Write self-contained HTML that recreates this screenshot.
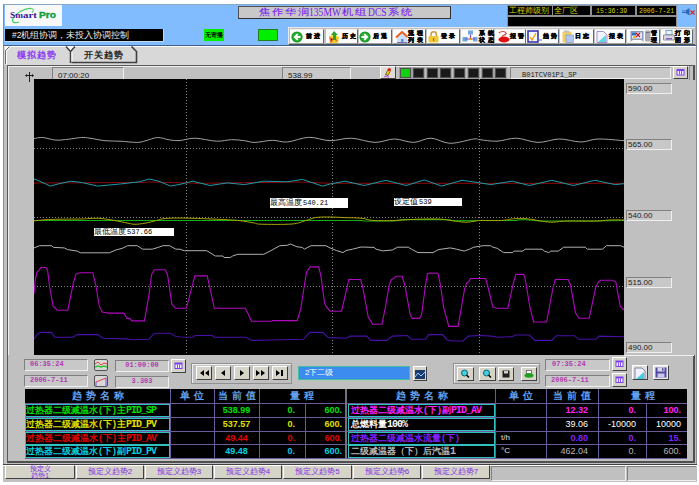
<!DOCTYPE html><html><head><meta charset="utf-8"><style>
*{margin:0;padding:0;box-sizing:border-box}
html,body{width:699px;height:485px;overflow:hidden;background:#fff}
body{position:relative;font-family:"Liberation Sans",sans-serif}
.a{position:absolute;overflow:hidden;white-space:nowrap}
.m{font-family:"Liberation Mono",monospace}
.s{font-family:"Liberation Serif",serif}
</style></head><body>
<div class="a" style="left:3px;top:4px;width:694px;height:477px;background:#c0c0c0;border-left:1px solid #8c8c8c;border-right:1px solid #8c8c8c;border-bottom:1px solid #8c8c8c;"></div>
<div class="a" style="left:3px;top:4px;width:694px;height:42px;background:#80bcff;border-top:1px solid #8aa8c8;border-left:1px solid #8c8c8c;border-right:1px solid #8c8c8c;border-bottom:1px solid #40608a;"></div>
<div class="a" style="left:5px;top:5px;width:57px;height:21px;background:#f8f8f8;"><svg width="57" height="21" viewBox="0 0 57 21" style="display:block">
<path d="M26 3.5C20 3 11 8 8 13.5c-2 4 2 5 6 3.5" fill="none" stroke="#30c850" stroke-width="1.3" opacity="0.9"/>
<path d="M26 3.5c3 0 3 2 1 4" fill="none" stroke="#30c850" stroke-width="1.1" opacity="0.8"/>
<text x="5" y="12.8" font-family="Liberation Serif" font-weight="bold" font-size="8.5" fill="#3a1aa0" textLength="13" lengthAdjust="spacingAndGlyphs">Sm</text>
<text x="18" y="12.8" font-family="Liberation Serif" font-weight="bold" font-size="8.5" fill="#3a1aa0" textLength="14" lengthAdjust="spacingAndGlyphs">art</text>
<text x="34" y="12.8" font-family="Liberation Sans" font-weight="bold" font-size="8.5" fill="#10a040" textLength="17" lengthAdjust="spacingAndGlyphs" stroke="#10a040" stroke-width="0.4">Pro</text>
</svg></div>
<div class="a" style="left:5px;top:29px;width:159px;height:13px;background:#000;border-bottom:1px solid #c0d8f0;border-right:1px solid #c0d8f0;color:#e8e8e8;font-size:8.5px;line-height:12px;padding-left:7px;letter-spacing:0px;">#2机组协调，未投入协调控制</div>
<div class="a" style="left:204px;top:29px;width:20px;height:12px;background:#00f000;color:#000;font-size:6px;line-height:12px;text-align:center;font-weight:bold;">无寄播</div>
<div class="a" style="left:258px;top:29px;width:20px;height:12px;background:#00ee00;border:1px solid #208020;"></div>
<div class="a" style="left:238px;top:6px;width:213px;height:13px;background:#c8c8c8;border:1px solid #505050;border-right-color:#303030;border-bottom-color:#303030;"></div>
<div style="position:absolute;top:7px;color:#7a20f0;line-height:11px;transform-origin:0 50%;white-space:nowrap;left:259px;font-size:9px;letter-spacing:1.5px;transform:scaleX(1.25);-webkit-text-stroke:0.1px #7a20f0">焦作华润</div>
<div class="s" style="position:absolute;top:7px;color:#7a20f0;line-height:11px;transform-origin:0 50%;white-space:nowrap;left:309px;font-size:12px;top:6px;line-height:12px;transform:scaleX(0.8)">135MW</div>
<div style="position:absolute;top:7px;color:#7a20f0;line-height:11px;transform-origin:0 50%;white-space:nowrap;left:342px;font-size:9px;letter-spacing:1.5px;transform:scaleX(1.25);-webkit-text-stroke:0.1px #7a20f0">机组</div>
<div class="s" style="position:absolute;top:7px;color:#7a20f0;line-height:11px;transform-origin:0 50%;white-space:nowrap;left:368px;font-size:12px;top:6px;line-height:12px;transform:scaleX(0.8)">DCS</div>
<div style="position:absolute;top:7px;color:#7a20f0;line-height:11px;transform-origin:0 50%;white-space:nowrap;left:388px;font-size:9px;letter-spacing:1.5px;transform:scaleX(1.25);-webkit-text-stroke:0.1px #7a20f0">系统</div>
<div class="a" style="left:507px;top:5px;width:170px;height:23px;background:#909090;"></div>
<div class="a" style="left:508px;top:6px;width:44px;height:9px;background:#000;color:#d0d000;font-size:8px;line-height:9px;padding-left:1px;">工程师级别</div>
<div class="a" style="left:553px;top:6px;width:37px;height:9px;background:#000;color:#d0d000;font-size:8px;line-height:9px;padding-left:1px;">全厂区</div>
<div class="a" style="left:592px;top:6px;width:43px;height:9px;background:#000;color:#d0d000;font-size:6.5px;line-height:10px;padding-left:4px;"><span class="m">15:36:39</span></div>
<div class="a" style="left:637px;top:6px;width:39px;height:9px;background:#000;color:#d0d000;font-size:6.5px;line-height:10px;padding-left:2px;"><span class="m">2006-7-21</span></div>
<div class="a" style="left:508px;top:17px;width:168px;height:9px;background:#000;"></div>
<div class="a" style="left:681px;top:6px;width:15px;height:12px;"><svg width="15" height="12" style="display:block"><path d="M1 4.5h3.5l4-2.5v7.5l-4-2.5H1z" fill="#3068b8"/><path d="M1 5.5h4" stroke="#80b0e8" stroke-width="0.8"/><path d="M9.5 4.5l4 4M13.5 4.5l-4 4" stroke="#e02020" stroke-width="1.1"/></svg></div>
<div class="a" style="left:288px;top:27px;width:407px;height:18px;background:#c0c0c0;border-top:1px solid #e8e8e8;border-left:1px solid #e8e8e8;border-bottom:1px solid #505050;"></div>
<div class="a" style="left:290px;top:29px;width:34px;height:15px;background:#fcfcfc;border-right:1px solid #606878;border-bottom:1px solid #a0a0a0;border-top:1px solid #f0f0f0;"></div>
<div class="a" style="left:326px;top:29px;width:32px;height:15px;background:#fcfcfc;border-right:1px solid #606878;border-bottom:1px solid #a0a0a0;border-top:1px solid #f0f0f0;"></div>
<div class="a" style="left:359px;top:29px;width:33px;height:15px;background:#fcfcfc;border-right:1px solid #606878;border-bottom:1px solid #a0a0a0;border-top:1px solid #f0f0f0;"></div>
<div class="a" style="left:393px;top:29px;width:33px;height:15px;background:#fcfcfc;border-right:1px solid #606878;border-bottom:1px solid #a0a0a0;border-top:1px solid #f0f0f0;"></div>
<div class="a" style="left:427px;top:29px;width:33px;height:15px;background:#fcfcfc;border-right:1px solid #606878;border-bottom:1px solid #a0a0a0;border-top:1px solid #f0f0f0;"></div>
<div class="a" style="left:461px;top:29px;width:33px;height:15px;background:#fcfcfc;border-right:1px solid #606878;border-bottom:1px solid #a0a0a0;border-top:1px solid #f0f0f0;"></div>
<div class="a" style="left:495px;top:29px;width:31px;height:15px;background:#fcfcfc;border-right:1px solid #606878;border-bottom:1px solid #a0a0a0;border-top:1px solid #f0f0f0;"></div>
<div class="a" style="left:526px;top:29px;width:33px;height:15px;background:#fcfcfc;border-right:1px solid #606878;border-bottom:1px solid #a0a0a0;border-top:1px solid #f0f0f0;"></div>
<div class="a" style="left:560px;top:29px;width:34px;height:15px;background:#fcfcfc;border-right:1px solid #606878;border-bottom:1px solid #a0a0a0;border-top:1px solid #f0f0f0;"></div>
<div class="a" style="left:595px;top:29px;width:31px;height:15px;background:#fcfcfc;border-right:1px solid #606878;border-bottom:1px solid #a0a0a0;border-top:1px solid #f0f0f0;"></div>
<div class="a" style="left:627px;top:29px;width:33px;height:15px;background:#fcfcfc;border-right:1px solid #606878;border-bottom:1px solid #a0a0a0;border-top:1px solid #f0f0f0;"></div>
<div class="a" style="left:661px;top:29px;width:32px;height:15px;background:#fcfcfc;border-right:1px solid #606878;border-bottom:1px solid #a0a0a0;border-top:1px solid #f0f0f0;"></div>
<svg class="a" style="left:291px;top:31px" width="12" height="12" viewBox="0 0 12 12"><circle cx="6" cy="6" r="5.6" fill="#1a9a2a"/><circle cx="6" cy="6" r="4.2" fill="#28b030"/><path d="M9.5 6H4.5M6.8 3.2L3.8 6l3 2.8" stroke="#fff" stroke-width="1.8" fill="none"/></svg>
<div class="a" style="left:306px;top:33px;font-size:6px;line-height:7px;font-weight:bold;color:#000;letter-spacing:2px;overflow:visible;-webkit-text-stroke:0.4px #000">前进</div>
<svg class="a" style="left:328px;top:30px" width="13" height="13" viewBox="0 0 13 13"><path d="M1 6l6-1 4 2-1 6H2z" fill="#f0d020"/><path d="M2 8l3 1-2 3zM7 9l2 2" stroke="#e06030" stroke-width="1.2"/><path d="M6 1l4 4H8v5H5V5H3z" fill="#30a030"/></svg>
<div class="a" style="left:342px;top:33px;font-size:6px;line-height:7px;font-weight:bold;color:#000;letter-spacing:2px;overflow:visible;-webkit-text-stroke:0.4px #000">历史</div>
<svg class="a" style="left:359px;top:31px" width="12" height="12" viewBox="0 0 12 12"><circle cx="6" cy="6" r="5.6" fill="#1a9a2a"/><circle cx="6" cy="6" r="4.2" fill="#28b030"/><path d="M2.5 6H7.5M5.2 3.2L8.2 6l-3 2.8" stroke="#fff" stroke-width="1.8" fill="none"/></svg>
<div class="a" style="left:373px;top:33px;font-size:6px;line-height:7px;font-weight:bold;color:#000;letter-spacing:2px;overflow:visible;-webkit-text-stroke:0.4px #000">后退</div>
<svg class="a" style="left:395px;top:31px" width="13" height="12" viewBox="0 0 13 12"><path d="M2 6L7 1.5 12 6v5.5H2z" fill="#c8e0f8"/><path d="M1 6.5L7 1l5.5 5" stroke="#f06020" stroke-width="2" fill="none"/><rect x="6" y="8" width="2.5" height="3.5" fill="#6090d0"/><path d="M2 11.5h10" stroke="#8070c0"/></svg>
<div class="a" style="left:408px;top:30px;font-size:6px;line-height:6.5px;font-weight:bold;color:#000;letter-spacing:3px;overflow:visible;-webkit-text-stroke:0.4px #000">流程<br>列表</div>
<svg class="a" style="left:427px;top:30px" width="13" height="13" viewBox="0 0 13 13"><path d="M4 6.5V4.5a2.7 2.7 0 0 1 5.4 0v2" stroke="#c0a040" stroke-width="1.5" fill="none"/><rect x="1.5" y="6" width="10" height="6.5" rx="1" fill="#f0c838"/><rect x="6" y="8" width="1.2" height="3" fill="#a07010"/></svg>
<div class="a" style="left:441px;top:33px;font-size:6px;line-height:7px;font-weight:bold;color:#000;letter-spacing:2px;overflow:visible;-webkit-text-stroke:0.4px #000">登录</div>
<svg class="a" style="left:462px;top:30px" width="16" height="13" viewBox="0 0 16 13"><rect x="6" y="0.5" width="5" height="4" fill="#70a8e0"/><rect x="0.5" y="7" width="5" height="4.5" fill="#70a8e0"/><rect x="11" y="7" width="4.5" height="4.5" fill="#70a8e0"/><path d="M8.5 4.5v4M3 9h10" stroke="#8050c0" stroke-width="1.2"/><circle cx="8.5" cy="9" r="1.2" fill="#e0a000"/></svg>
<div class="a" style="left:479px;top:30px;font-size:6px;line-height:6.5px;font-weight:bold;color:#000;letter-spacing:3px;overflow:visible;-webkit-text-stroke:0.4px #000">系统<br>状态</div>
<svg class="a" style="left:497px;top:30px" width="13" height="13" viewBox="0 0 13 13"><path d="M2 3c2-2 6-2 7 0s-4 2-4 4" stroke="#d04040" stroke-width="1.2" fill="none"/><ellipse cx="7" cy="9.5" rx="5.5" ry="3" fill="#e01010"/></svg>
<div class="a" style="left:510px;top:33px;font-size:6px;line-height:7px;font-weight:bold;color:#000;letter-spacing:2px;overflow:visible;-webkit-text-stroke:0.4px #000">报警</div>
<svg class="a" style="left:527px;top:30px" width="15" height="13" viewBox="0 0 15 13"><rect x="1" y="1" width="10" height="11" fill="#f8f8ff" stroke="#3838b0" stroke-width="1.6"/><path d="M3 7l2 3 4-7" stroke="#f0a000" stroke-width="1.3" fill="none"/><path d="M11 10h4" stroke="#5060c0"/></svg>
<div class="a" style="left:543px;top:33px;font-size:6px;line-height:7px;font-weight:bold;color:#000;letter-spacing:2px;overflow:visible;-webkit-text-stroke:0.4px #000">趋势</div>
<svg class="a" style="left:562px;top:30px" width="12" height="13" viewBox="0 0 12 13"><rect x="0.5" y="1.5" width="9" height="11" rx="1" fill="#f0d060"/><rect x="2" y="0.5" width="5" height="2" fill="#c0c0c0"/><rect x="4" y="5" width="7.5" height="7.5" fill="#b0c8f0" stroke="#8090c0" stroke-width="0.6"/></svg>
<div class="a" style="left:575px;top:33px;font-size:6px;line-height:7px;font-weight:bold;color:#000;letter-spacing:2px;overflow:visible;-webkit-text-stroke:0.4px #000">日志</div>
<svg class="a" style="left:596px;top:31px" width="12" height="12" viewBox="0 0 12 12"><path d="M1 0.5h6.5l3.5 3.5v7.5H1z" fill="#f4f4ff" stroke="#a090d0"/><path d="M2 11L10 4v7z" fill="#60d8e8"/></svg>
<div class="a" style="left:609px;top:33px;font-size:6px;line-height:7px;font-weight:bold;color:#000;letter-spacing:2px;overflow:visible;-webkit-text-stroke:0.4px #000">报表</div>
<svg class="a" style="left:630px;top:30px" width="21" height="12" viewBox="0 0 21 12"><rect x="0.5" y="1" width="13" height="9" fill="#8a98c0"/><rect x="2" y="2.5" width="10" height="6" fill="#e8f0f8"/><rect x="2" y="2.5" width="4" height="3" fill="#3070c0"/><path d="M6 3l4 4M10 3L6 7" stroke="#c01830" stroke-width="1.3"/><rect x="3" y="6" width="3" height="2" fill="#f0c020"/><path d="M0 11.5l3-2h8l3 2" stroke="#a0a0a0" fill="none"/><rect x="15" y="0.5" width="5.5" height="11" rx="1" fill="#a8a8b8"/><rect x="16" y="2" width="3.5" height="1" fill="#707080"/></svg>
<div class="a" style="left:651px;top:30px;font-size:6px;line-height:6.5px;font-weight:bold;color:#000;letter-spacing:3px;overflow:visible;-webkit-text-stroke:0.4px #000">管<br>理</div>
<svg class="a" style="left:663px;top:30px" width="12" height="11" viewBox="0 0 12 11"><rect x="3" y="0.5" width="6" height="4" fill="#e8f8ff" stroke="#80a0c0"/><path d="M0.5 5h11v5H0.5z" fill="#d8d8e0" stroke="#909098"/><rect x="3" y="8" width="6" height="1.5" fill="#8060c0"/></svg>
<div class="a" style="left:675px;top:30px;font-size:6px;line-height:6.5px;font-weight:bold;color:#000;letter-spacing:3px;overflow:visible;-webkit-text-stroke:0.4px #000">打印<br>图形</div>
<div class="a" style="left:4px;top:46px;width:692px;height:19px;background:#d8d8d8;border-top:1px solid #fff;"></div>
<svg class="a" style="left:4px;top:46px" width="140" height="19" viewBox="4 46 140 19">
<path d="M4 46H10L5 51V46z" fill="#ffffff"/><path d="M65 46H76L70.5 52z" fill="#ffffff"/>
<path d="M5.5 64V50.5L9.5 46.5" fill="none" stroke="#6a6a6a" stroke-width="1"/>
<path d="M6.5 64V51L10 47.5" fill="none" stroke="#ffffff" stroke-width="1"/>
<path d="M70.5 63V51.5L66 46.5M70.5 51.5L75 46.5" fill="none" stroke="#404040" stroke-width="1.5"/>
<path d="M71.5 62.5H136.5V51.5L131.5 46.5" fill="none" stroke="#404040" stroke-width="1.6"/>
<path d="M72 61.5V52" stroke="#ffffff" stroke-width="1"/>
</svg>
<div class="a" style="left:17px;top:48px;width:50px;height:14px;color:#8a3af0;font-size:9px;line-height:14px;letter-spacing:1px;-webkit-text-stroke:0.35px #8a3af0">模拟趋势</div>
<div class="a" style="left:84px;top:48px;width:50px;height:14px;color:#202020;font-size:9px;line-height:14px;letter-spacing:1px;-webkit-text-stroke:0.35px #202020">开关趋势</div>
<div class="a" style="left:7px;top:65px;width:688px;height:291px;background:#c0c0c0;border-top:1px solid #5a5a5a;border-left:1px solid #5a5a5a;box-shadow:inset 1px 1px 0 #f0f0f0;"></div>
<svg class="a" style="left:24px;top:71px" width="11" height="12"><path d="M5.5 1v10M2 4.5h7" stroke="#101010" stroke-width="0.9"/><path d="M1 4.5l2-1.5v3zM10 4.5l-2-1.5v3z" fill="#101010"/></svg>
<div class="a" style="left:52px;top:67px;width:72px;height:13px;background:#c8c8c8;border-top:1px solid #808080;border-left:1px solid #808080;border-bottom:1px solid #f0f0f0;border-right:1px solid #f0f0f0;color:#202020;font-size:8px;line-height:15px;padding-left:5px;">07:00:20</div>
<div class="a" style="left:282px;top:67px;width:69px;height:13px;background:#c8c8c8;border-top:1px solid #808080;border-left:1px solid #808080;border-bottom:1px solid #f0f0f0;border-right:1px solid #f0f0f0;color:#202020;font-size:8px;line-height:15px;padding-left:5px;">538.99</div>
<div class="a" style="left:380px;top:66px;width:16px;height:13px;background:#d6d3c8;border-top:1px solid #fff;border-left:1px solid #fff;border-bottom:1px solid #404040;border-right:1px solid #404040;background:#e0dcd4;"><svg width="14" height="11" style="display:block"><path d="M4.5 7.5L7 2.5l2.5 1.2L7 8.7z" fill="#f0c000" stroke="#303030" stroke-width="0.6"/><circle cx="8.3" cy="2.5" r="1.6" fill="#e02020"/><path d="M4.5 8l0.5-0.5" stroke="#000"/><path d="M3 10c1.5-1.5 3 0 5 0" stroke="#a040e0" fill="none"/></svg></div>
<div class="a" style="left:400px;top:68px;width:11px;height:10px;background:#10d010;border:1px solid #505050;box-shadow:0 0 0 1px #a0a0a0;"></div>
<div class="a" style="left:413px;top:68px;width:11px;height:10px;background:#1a1a1a;border:1px solid #505050;box-shadow:0 0 0 1px #a0a0a0;"></div>
<div class="a" style="left:427px;top:68px;width:11px;height:10px;background:#1a1a1a;border:1px solid #505050;box-shadow:0 0 0 1px #a0a0a0;"></div>
<div class="a" style="left:440px;top:68px;width:11px;height:10px;background:#1a1a1a;border:1px solid #505050;box-shadow:0 0 0 1px #a0a0a0;"></div>
<div class="a" style="left:454px;top:68px;width:11px;height:10px;background:#1a1a1a;border:1px solid #505050;box-shadow:0 0 0 1px #a0a0a0;"></div>
<div class="a" style="left:468px;top:68px;width:11px;height:10px;background:#1a1a1a;border:1px solid #505050;box-shadow:0 0 0 1px #a0a0a0;"></div>
<div class="a" style="left:482px;top:68px;width:11px;height:10px;background:#1a1a1a;border:1px solid #505050;box-shadow:0 0 0 1px #a0a0a0;"></div>
<div class="a" style="left:495px;top:68px;width:11px;height:10px;background:#1a1a1a;border:1px solid #505050;box-shadow:0 0 0 1px #a0a0a0;"></div>
<div class="a" style="left:510px;top:67px;width:161px;height:12px;background:#c8c8c8;border-top:1px solid #808080;border-left:1px solid #808080;border-bottom:1px solid #f0f0f0;border-right:1px solid #f0f0f0;color:#202020;font-size:7px;line-height:14px;padding-left:11px;"><span class="m">B01TCV01P1_SP</span></div>
<div class="a" style="left:673px;top:66px;width:15px;height:13px;background:#d6d3c8;border-top:1px solid #fff;border-left:1px solid #fff;border-bottom:1px solid #404040;border-right:1px solid #404040;"><svg width="13" height="11" style="display:block"><rect x="2.5" y="2" width="8" height="6.5" fill="#7a40f0"/><rect x="3.5" y="4" width="6" height="3.5" fill="#f4f0ff"/><path d="M5.5 4v3.5M7.5 4v3.5" stroke="#7a40f0" stroke-width="0.9"/></svg></div>
<div class="a" style="left:689px;top:66px;width:6px;height:14px;background:#c0c0c0;border-left:1px solid #909090;border-right:2px solid #505050;"></div>
<svg class="a" style="left:34px;top:79px" width="590" height="276" viewBox="34 79 590 276"><rect x="34" y="79" width="590" height="276" fill="#000"/><line x1="186.5" y1="79" x2="186.5" y2="355" stroke="#858585" stroke-dasharray="1 2"/><line x1="332.5" y1="79" x2="332.5" y2="355" stroke="#858585" stroke-dasharray="1 2"/><line x1="479.5" y1="79" x2="479.5" y2="355" stroke="#858585" stroke-dasharray="1 2"/><line x1="34" y1="148.5" x2="624" y2="148.5" stroke="#858585" stroke-dasharray="1 2"/><line x1="34" y1="217.5" x2="624" y2="217.5" stroke="#858585" stroke-dasharray="1 2"/><line x1="34" y1="286.5" x2="624" y2="286.5" stroke="#858585" stroke-dasharray="1 2"/><path fill="none" stroke="#a0a0a0" stroke-width="1" d="M34.0 138.6 C35.5 138.4 39.3 137.2 42.9 137.5 C46.5 137.8 51.5 139.8 55.8 140.1 C60.1 140.4 64.3 139.6 68.6 139.2 C72.9 138.8 77.9 137.7 81.5 137.5 C85.1 137.3 86.1 137.7 90.0 138.2 C93.9 138.7 100.0 140.2 105.0 140.7 C110.0 141.2 114.6 140.9 120.0 141.2 C125.4 141.5 133.0 142.5 137.3 142.4 C141.6 142.3 142.5 141.5 145.9 140.7 C149.3 139.9 153.8 137.6 157.7 137.5 C161.6 137.4 165.8 139.4 169.5 139.9 C173.2 140.4 175.8 140.8 180.0 140.5 C184.2 140.2 188.9 138.1 195.0 138.2 C201.1 138.3 210.4 140.9 216.5 141.2 C222.6 141.4 226.8 139.8 231.5 139.7 C236.2 139.6 240.5 140.2 244.4 140.7 C248.3 141.1 250.3 142.5 255.0 142.4 C259.6 142.3 266.9 140.4 272.3 140.3 C277.7 140.2 281.2 142.5 287.3 142.0 C293.4 141.5 301.7 137.5 308.8 137.3 C315.9 137.1 322.9 140.5 330.0 140.7 C337.1 140.8 344.0 137.9 351.5 138.2 C359.0 138.5 367.9 142.3 375.0 142.4 C382.1 142.5 387.9 139.0 394.4 139.0 C400.8 139.0 407.6 142.5 413.7 142.4 C419.8 142.3 424.8 138.0 430.9 138.2 C437.0 138.3 443.0 143.2 450.2 143.3 C457.4 143.4 468.8 139.6 473.8 139.0 C478.8 138.4 476.1 139.3 480.0 139.7 C483.9 140.1 490.9 141.4 497.0 141.2 C503.1 140.9 509.7 138.0 516.5 138.2 C523.3 138.4 530.9 142.3 538.0 142.4 C545.1 142.5 552.2 139.1 559.4 139.0 C566.5 138.9 574.5 142.0 580.9 142.0 C587.3 142.0 590.8 139.2 598.0 139.0 C605.2 138.8 619.7 140.4 624.0 140.7"/><polyline fill="none" stroke="#900808" stroke-width="1" points="34.0,183.0 140.0,182.5 150.0,182.0 200.0,183.3 260.0,182.5 300.0,182.0 330.0,183.3 624.0,183.3"/><polyline fill="none" stroke="#1a9cac" stroke-width="1" points="34.0,179.0 39.7,181.2 50.4,186.1 57.9,184.0 70.8,181.2 81.5,182.4 97.6,186.1 120.1,184.0 139.4,181.8 149.1,179.0 158.8,181.2 170.6,186.1 180.0,184.3 192.9,181.2 210.0,185.5 227.2,182.9 244.4,184.6 263.7,181.2 287.3,181.8 302.3,179.4 322.7,186.1 330.0,184.0 345.0,181.2 364.3,185.5 385.8,180.3 406.2,185.5 424.4,179.9 441.6,186.1 462.0,180.3 480.0,182.9 490.7,184.6 512.2,181.2 529.4,185.5 551.9,180.3 573.3,185.5 594.8,180.3 615.2,184.6 624.0,183.7"/><polyline fill="none" stroke="#14b014" stroke-width="1.1" points="34.0,220.5 330.0,220.5 362.0,220.5 364.0,221.0 394.0,221.0 403.0,219.6 446.0,219.6 454.0,220.9 480.0,220.5 516.0,220.5 520.0,219.8 526.0,219.8 540.0,221.0 596.0,221.0 624.0,220.5"/><path fill="none" stroke="#a8a400" stroke-width="1" d="M34.0 220.9 C35.8 220.7 40.7 220.1 45.0 219.8 C49.3 219.5 53.9 219.3 60.0 219.2 C66.1 219.1 76.5 219.1 81.5 219.0 C86.5 218.9 86.9 218.6 90.0 218.5 C93.1 218.4 96.1 218.1 100.0 218.4 C103.9 218.7 108.9 219.5 113.6 220.3 C118.3 221.1 124.4 222.5 128.0 223.2 C131.6 223.9 132.2 224.3 135.0 224.3 C137.8 224.3 141.4 223.8 145.0 223.2 C148.6 222.6 153.2 221.3 156.5 220.5 C159.8 219.7 160.2 218.9 165.0 218.5 C169.8 218.1 175.8 217.9 185.0 218.1 C194.2 218.2 211.0 219.0 220.0 219.4 C229.0 219.8 233.2 219.9 238.9 220.5 C244.6 221.1 250.6 222.4 254.3 223.0 C258.0 223.6 254.9 224.0 261.2 224.2 C267.5 224.4 284.6 224.6 292.0 224.0 C299.4 223.4 301.8 221.6 305.8 220.5 C309.8 219.4 312.0 218.1 316.0 217.5 C320.0 216.9 325.2 217.0 330.0 217.0 C334.8 217.0 339.7 217.4 345.0 217.6 C350.3 217.8 357.3 217.8 362.0 218.3 C366.7 218.8 367.7 220.1 373.0 220.5 C378.3 220.9 387.8 220.7 394.0 220.5 C400.2 220.3 404.5 219.8 410.0 219.5 C415.5 219.2 421.8 219.1 427.0 219.0 C432.2 218.9 436.8 218.9 441.0 219.2 C445.2 219.4 448.0 220.0 452.0 220.5 C456.0 221.0 461.2 222.1 465.0 222.2 C468.8 222.3 472.5 221.5 475.0 221.2 C477.5 220.9 475.7 220.6 480.0 220.5 C484.3 220.4 496.0 220.7 501.0 220.5 C506.0 220.3 507.5 219.5 510.0 219.2 C512.5 218.9 513.3 218.8 516.0 218.7 C518.7 218.6 522.3 218.4 526.0 218.7 C529.7 219.0 533.9 219.9 538.0 220.5 C542.1 221.1 546.8 222.1 550.8 222.2 C554.8 222.3 558.8 221.5 562.0 221.3 C565.2 221.1 564.3 221.1 570.0 221.0 C575.7 220.9 589.3 221.2 596.0 221.0 C602.7 220.8 605.3 220.2 610.0 220.0 C614.7 219.8 621.7 220.0 624.0 220.0"/><polyline fill="none" stroke="#b0b0b0" stroke-width="1" points="34.0,247.9 39.7,245.7 51.5,245.7 53.6,247.4 64.3,247.9 67.6,249.6 77.2,251.1 80.4,252.8 109.4,252.8 115.8,250.0 122.3,248.3 127.6,245.7 137.3,245.7 142.7,249.2 152.3,249.2 158.8,247.2 163.0,245.7 169.5,245.7 175.9,249.2 180.0,249.2 184.3,250.7 206.8,250.7 215.4,256.0 222.9,256.0 224.0,257.5 230.4,257.5 232.6,256.0 237.9,254.3 263.7,254.3 270.1,251.1 279.8,245.7 287.3,245.3 290.5,244.0 297.0,246.8 302.3,247.4 304.5,249.2 310.9,245.7 325.9,245.7 330.0,247.9 336.4,250.5 342.9,252.6 346.1,250.5 352.5,249.2 361.1,247.0 374.0,247.4 376.1,249.2 382.6,250.9 392.2,250.0 397.6,247.2 408.3,247.2 411.5,249.2 418.0,252.6 433.0,252.6 438.4,249.6 450.2,247.9 456.6,249.2 464.1,251.1 469.5,249.2 473.8,247.2 483.2,245.7 490.7,245.7 492.9,247.2 497.2,248.3 503.6,252.6 512.2,252.6 514.3,251.1 522.9,251.1 525.1,249.2 542.2,249.2 544.4,251.1 548.7,252.6 550.8,251.1 558.3,251.1 563.7,247.2 585.2,247.2 587.3,249.2 602.3,249.2 606.6,245.7 620.6,245.7 624.0,247.2"/><polyline fill="none" stroke="#b008c0" stroke-width="1.1" points="34.0,293.9 35.0,281.6 36.9,272.3 38.7,270.4 40.8,267.5 45.9,267.5 47.6,270.1 49.5,286.0 53.1,306.2 57.4,310.2 67.8,310.2 73.3,283.1 75.9,274.1 79.8,272.7 92.8,272.7 95.7,284.5 99.3,306.2 102.2,312.0 108.6,313.1 123.8,313.1 127.0,318.4 130.0,318.4 131.7,320.9 144.4,320.9 148.8,296.1 151.6,274.4 154.5,269.8 165.4,269.8 167.5,274.4 171.8,304.0 175.5,308.3 186.3,308.3 194.9,275.9 207.2,275.9 214.4,308.3 245.2,308.3 248.0,313.4 251.6,321.3 271.8,321.3 272.6,320.6 297.1,320.6 300.7,309.1 304.3,286.0 306.5,272.3 310.1,266.9 318.7,266.9 320.9,275.9 324.5,302.6 326.4,306.9 330.0,311.2 341.5,311.2 344.4,299.0 348.8,279.5 360.6,279.5 362.5,286.0 368.2,317.0 372.6,324.2 382.0,324.2 385.6,306.2 389.2,285.3 391.3,279.5 393.5,278.8 395.7,276.3 402.2,276.3 405.0,286.0 410.1,314.1 412.3,318.4 419.5,318.4 421.6,314.8 425.2,287.4 427.4,273.7 430.0,273.0 437.9,273.3 440.1,283.1 443.7,307.6 448.8,326.4 458.1,326.4 464.6,288.9 466.8,282.8 469.0,281.6 470.4,278.5 485.6,278.5 487.7,286.0 492.8,306.9 496.4,308.3 507.9,308.3 513.0,284.5 515.9,274.4 523.8,274.4 525.2,278.8 530.0,307.6 533.6,322.0 546.6,322.0 553.1,287.4 555.3,279.5 568.2,279.5 570.4,284.5 575.5,312.7 579.1,318.2 589.2,318.2 595.7,287.4 598.5,281.9 600.7,280.2 612.3,280.2 615.9,282.4 620.2,306.2 623.1,309.4 624.0,309.4"/><polyline fill="none" stroke="#4810a8" stroke-width="1.1" points="34.0,339.3 37.5,333.9 40.7,332.4 51.5,332.4 54.7,337.2 72.9,337.2 77.2,334.6 97.6,334.6 103.0,338.2 125.5,338.9 133.0,339.7 149.1,339.3 153.4,333.9 156.6,333.3 170.6,333.3 174.8,336.1 180.0,337.0 192.9,337.2 195.0,335.5 212.2,335.5 214.3,337.2 245.5,337.2 251.9,340.4 270.1,340.0 303.4,339.3 309.8,332.4 322.7,332.4 328.1,337.2 330.0,337.6 346.1,338.2 350.4,336.1 366.5,336.1 370.8,340.4 386.9,340.4 392.2,336.1 407.3,335.5 411.5,339.3 425.5,339.3 428.7,334.6 442.7,334.6 447.0,339.7 452.3,341.0 463.0,341.0 468.4,336.1 480.0,335.5 491.8,336.1 497.2,337.2 512.2,336.7 515.4,335.0 529.4,335.0 534.7,340.4 551.9,340.4 556.2,335.7 574.4,335.7 578.7,339.3 595.9,339.3 599.1,336.1 624.0,336.7"/></svg>
<div class="a" style="left:94px;top:228px;width:80px;height:8px;background:#fff;color:#000;font-size:8px;line-height:8px;padding-left:0px;">最低温度<span class="m" style="font-size:7px;padding-left:1px">537.66</span></div>
<div class="a" style="left:270px;top:198px;width:78px;height:10px;background:#fff;color:#000;font-size:8px;line-height:10px;padding-left:0px;">最高温度<span class="m" style="font-size:7px;padding-left:1px">540.21</span></div>
<div class="a" style="left:394px;top:198px;width:68px;height:8px;background:#fff;color:#000;font-size:8px;line-height:8px;padding-left:0px;">设定值<span class="m" style="font-size:7px;padding-left:1px">539</span></div>
<div class="a" style="left:626px;top:83px;width:46px;height:11px;background:#c8c8c8;border-top:1px solid #808080;border-left:1px solid #808080;border-bottom:1px solid #f0f0f0;border-right:1px solid #f0f0f0;color:#202020;font-size:8px;line-height:10px;padding-left:1px;">590.00</div>
<div class="a" style="left:626px;top:139px;width:46px;height:11px;background:#c8c8c8;border-top:1px solid #808080;border-left:1px solid #808080;border-bottom:1px solid #f0f0f0;border-right:1px solid #f0f0f0;color:#202020;font-size:8px;line-height:10px;padding-left:1px;">565.00</div>
<div class="a" style="left:626px;top:210px;width:46px;height:11px;background:#c8c8c8;border-top:1px solid #808080;border-left:1px solid #808080;border-bottom:1px solid #f0f0f0;border-right:1px solid #f0f0f0;color:#202020;font-size:8px;line-height:10px;padding-left:1px;">540.00</div>
<div class="a" style="left:626px;top:277px;width:46px;height:11px;background:#c8c8c8;border-top:1px solid #808080;border-left:1px solid #808080;border-bottom:1px solid #f0f0f0;border-right:1px solid #f0f0f0;color:#202020;font-size:8px;line-height:10px;padding-left:1px;">515.00</div>
<div class="a" style="left:626px;top:342px;width:46px;height:11px;background:#c8c8c8;border-top:1px solid #808080;border-left:1px solid #808080;border-bottom:1px solid #f0f0f0;border-right:1px solid #f0f0f0;color:#202020;font-size:8px;line-height:10px;padding-left:1px;">490.00</div>
<div class="a" style="left:7px;top:355px;width:688px;height:108px;background:#c0c0c0;border-left:1px solid #5a5a5a;border-right:2px solid #505050;border-bottom:2px solid #505050;"></div>
<div class="a" style="left:624px;top:355px;width:70px;height:1px;background:#f0f0f0;"></div>
<div class="a" style="left:24px;top:359px;width:64px;height:12px;background:#c8c8c8;border-top:1px solid #808080;border-left:1px solid #808080;border-bottom:1px solid #f0f0f0;border-right:1px solid #f0f0f0;color:#b038b0;font-size:7px;line-height:9px;font-family:Liberation Mono,monospace;font-weight:bold;padding-left:5px;">06:35:24</div>
<div class="a" style="left:24px;top:375px;width:64px;height:12px;background:#c8c8c8;border-top:1px solid #808080;border-left:1px solid #808080;border-bottom:1px solid #f0f0f0;border-right:1px solid #f0f0f0;color:#b038b0;font-size:7px;line-height:9px;font-family:Liberation Mono,monospace;font-weight:bold;padding-left:5px;">2006-7-11</div>
<div class="a" style="left:94px;top:359px;width:14px;height:12px;border:1px solid #505050;border-radius:2px;background:#d8d8d8;"><svg width="12" height="10" style="display:block"><path d="M0 4l3-2 3 3 3-2 3 1" stroke="#e04040" fill="none"/><path d="M0 7l3-1 3 1 3-1 3 1" stroke="#30c030" fill="none" stroke-width="1.5"/></svg></div>
<div class="a" style="left:94px;top:375px;width:14px;height:12px;border:1px solid #505050;border-radius:2px;background:#d8d8d8;"><svg width="12" height="10" style="display:block"><path d="M1 6l10-4" stroke="#e04040" fill="none"/><path d="M1 6v4M11 2v8" stroke="#8040e0"/></svg></div>
<div class="a" style="left:115px;top:360px;width:54px;height:12px;background:#c8c8c8;border-top:1px solid #808080;border-left:1px solid #808080;border-bottom:1px solid #f0f0f0;border-right:1px solid #f0f0f0;color:#b038b0;font-size:7px;line-height:9px;font-family:Liberation Mono,monospace;font-weight:bold;text-align:center;">01:00:00</div>
<div class="a" style="left:115px;top:376px;width:54px;height:12px;background:#c8c8c8;border-top:1px solid #808080;border-left:1px solid #808080;border-bottom:1px solid #f0f0f0;border-right:1px solid #f0f0f0;color:#b038b0;font-size:7px;line-height:9px;font-family:Liberation Mono,monospace;font-weight:bold;text-align:center;">3.303</div>
<div class="a" style="left:171px;top:359px;width:15px;height:14px;background:#d6d3c8;border-top:1px solid #fff;border-left:1px solid #fff;border-bottom:1px solid #404040;border-right:1px solid #404040;"><svg width="13" height="12" style="display:block"><rect x="2.5" y="2.5" width="8" height="6.5" fill="#7a40f0"/><rect x="3.5" y="4.5" width="6" height="3.5" fill="#f4f0ff"/><path d="M5.5 4.5v3.5M7.5 4.5v3.5" stroke="#7a40f0" stroke-width="0.9"/></svg></div>
<div class="a" style="left:191px;top:363px;width:101px;height:21px;border:1px solid #909090;box-shadow:inset 1px 1px 0 #f0f0f0;"></div>
<div class="a" style="left:196px;top:366px;width:16px;height:14px;background:#d6d3c8;border-top:1px solid #fff;border-left:1px solid #fff;border-bottom:1px solid #404040;border-right:1px solid #404040;"><svg width="14" height="12" style="display:block"><path d="M7 3v6l-4-3zM12 3v6l-4-3z" fill="#000"/></svg></div>
<div class="a" style="left:215px;top:366px;width:16px;height:14px;background:#d6d3c8;border-top:1px solid #fff;border-left:1px solid #fff;border-bottom:1px solid #404040;border-right:1px solid #404040;"><svg width="14" height="12" style="display:block"><path d="M9 3v6l-4-3z" fill="#000"/></svg></div>
<div class="a" style="left:234px;top:366px;width:16px;height:14px;background:#d6d3c8;border-top:1px solid #fff;border-left:1px solid #fff;border-bottom:1px solid #404040;border-right:1px solid #404040;"><svg width="14" height="12" style="display:block"><path d="M5 3v6l4-3z" fill="#000"/></svg></div>
<div class="a" style="left:253px;top:366px;width:16px;height:14px;background:#d6d3c8;border-top:1px solid #fff;border-left:1px solid #fff;border-bottom:1px solid #404040;border-right:1px solid #404040;"><svg width="14" height="12" style="display:block"><path d="M2 3v6l4-3zM7 3v6l4-3z" fill="#000"/></svg></div>
<div class="a" style="left:272px;top:366px;width:16px;height:14px;background:#d6d3c8;border-top:1px solid #fff;border-left:1px solid #fff;border-bottom:1px solid #404040;border-right:1px solid #404040;"><svg width="14" height="12" style="display:block"><path d="M3 3v6l4-3zM8 3h2v6H8z" fill="#000"/></svg></div>
<div class="a" style="left:298px;top:366px;width:112px;height:14px;background:#3c8cf0;border:1px solid #40c0a0;color:#fff;font-size:8px;line-height:12px;padding-left:6px;">2下二级</div>
<div class="a" style="left:413px;top:366px;width:14px;height:15px;background:#d6d3c8;border-top:1px solid #fff;border-left:1px solid #fff;border-bottom:1px solid #404040;border-right:1px solid #404040;"><svg width="12" height="13"><rect x="1" y="2" width="10" height="9" fill="#1a3a70"/><path d="M1 9l3-4 3 3 4-4" stroke="#a0d0ff" fill="none"/></svg></div>
<div class="a" style="left:453px;top:363px;width:87px;height:21px;border:1px solid #909090;box-shadow:inset 1px 1px 0 #f0f0f0;"></div>
<div class="a" style="left:457px;top:367px;width:17px;height:14px;background:#d6d3c8;border-top:1px solid #fff;border-left:1px solid #fff;border-bottom:1px solid #404040;border-right:1px solid #404040;"><svg width="15" height="12" style="display:block"><circle cx="6.5" cy="5" r="3" fill="#40d0e0" stroke="#106070"/><path d="M8.5 7l2.5 2.5" stroke="#000" stroke-width="1.5"/></svg></div>
<div class="a" style="left:479px;top:367px;width:17px;height:14px;background:#d6d3c8;border-top:1px solid #fff;border-left:1px solid #fff;border-bottom:1px solid #404040;border-right:1px solid #404040;"><svg width="15" height="12" style="display:block"><circle cx="6.5" cy="5" r="3" fill="#40d0e0" stroke="#106070"/><path d="M8.5 7l2.5 2.5" stroke="#000" stroke-width="1.5"/></svg></div>
<div class="a" style="left:498px;top:367px;width:16px;height:14px;background:#d6d3c8;border-top:1px solid #fff;border-left:1px solid #fff;border-bottom:1px solid #404040;border-right:1px solid #404040;"><svg width="14" height="12" style="display:block"><rect x="3.5" y="2.5" width="7" height="7" fill="#202020"/><rect x="5" y="3" width="4" height="2.5" fill="#d0d0d0"/></svg></div>
<div class="a" style="left:521px;top:367px;width:16px;height:14px;background:#d6d3c8;border-top:1px solid #fff;border-left:1px solid #fff;border-bottom:1px solid #404040;border-right:1px solid #404040;"><svg width="14" height="12" style="display:block"><rect x="4.5" y="2.5" width="5" height="3" fill="#fff" stroke="#606060" stroke-width="0.8"/><ellipse cx="7" cy="7.5" rx="4.5" ry="2.2" fill="#20a020"/></svg></div>
<div class="a" style="left:545px;top:359px;width:65px;height:12px;background:#c8c8c8;border-top:1px solid #808080;border-left:1px solid #808080;border-bottom:1px solid #f0f0f0;border-right:1px solid #f0f0f0;color:#b038b0;font-size:7px;line-height:9px;font-family:Liberation Mono,monospace;font-weight:bold;padding-left:6px;">07:35:24</div>
<div class="a" style="left:545px;top:375px;width:65px;height:12px;background:#c8c8c8;border-top:1px solid #808080;border-left:1px solid #808080;border-bottom:1px solid #f0f0f0;border-right:1px solid #f0f0f0;color:#b038b0;font-size:7px;line-height:9px;font-family:Liberation Mono,monospace;font-weight:bold;padding-left:5px;">2006-7-11</div>
<div class="a" style="left:612px;top:357px;width:15px;height:14px;background:#d6d3c8;border-top:1px solid #fff;border-left:1px solid #fff;border-bottom:1px solid #404040;border-right:1px solid #404040;"><svg width="13" height="12" style="display:block"><rect x="2.5" y="2.5" width="8" height="6.5" fill="#7a40f0"/><rect x="3.5" y="4.5" width="6" height="3.5" fill="#f4f0ff"/><path d="M5.5 4.5v3.5M7.5 4.5v3.5" stroke="#7a40f0" stroke-width="0.9"/></svg></div>
<div class="a" style="left:612px;top:373px;width:15px;height:14px;background:#d6d3c8;border-top:1px solid #fff;border-left:1px solid #fff;border-bottom:1px solid #404040;border-right:1px solid #404040;"><svg width="13" height="12" style="display:block"><rect x="2.5" y="2.5" width="8" height="6.5" fill="#7a40f0"/><rect x="3.5" y="4.5" width="6" height="3.5" fill="#f4f0ff"/><path d="M5.5 4.5v3.5M7.5 4.5v3.5" stroke="#7a40f0" stroke-width="0.9"/></svg></div>
<div class="a" style="left:632px;top:365px;width:16px;height:15px;background:#d6d3c8;border-top:1px solid #fff;border-left:1px solid #fff;border-bottom:1px solid #404040;border-right:1px solid #404040;background:#e0e0e0;"><svg width="14" height="13"><path d="M2 1h7l3 3v9H2z" fill="#f0f0ff" stroke="#8080a0"/><path d="M3 12l8-7v7z" fill="#40d0e0"/></svg></div>
<div class="a" style="left:653px;top:365px;width:16px;height:15px;background:#d6d3c8;border-top:1px solid #fff;border-left:1px solid #fff;border-bottom:1px solid #404040;border-right:1px solid #404040;background:#e8e8e8;"><svg width="14" height="13" style="display:block"><path d="M1.5 1.5h11v10h-11z" fill="#5048a8"/><rect x="3.5" y="1.5" width="7" height="4" fill="#d8d8e0"/><rect x="8" y="2.2" width="1.5" height="2.5" fill="#5048a8"/><rect x="3.5" y="7.5" width="7" height="4" fill="#c8c8e8"/></svg></div>
<div class="a" style="left:25px;top:389px;width:662px;height:70px;background:#000;"></div>
<div class="a" style="left:25px;top:389px;width:145px;height:14px;color:#60a0f0;font-size:10px;line-height:14px;font-weight:bold;text-align:center;letter-spacing:4px;text-indent:4px;">趋势名称</div>
<div class="a" style="left:170px;top:389px;width:44px;height:14px;color:#60a0f0;font-size:10px;line-height:14px;font-weight:bold;text-align:center;letter-spacing:4px;text-indent:4px;">单位</div>
<div class="a" style="left:214px;top:389px;width:45px;height:14px;color:#60a0f0;font-size:10px;line-height:14px;font-weight:bold;text-align:center;letter-spacing:4px;text-indent:4px;">当前值</div>
<div class="a" style="left:259px;top:389px;width:86px;height:14px;color:#60a0f0;font-size:10px;line-height:14px;font-weight:bold;text-align:center;letter-spacing:4px;text-indent:4px;">量程</div>
<div class="a" style="left:348px;top:389px;width:147px;height:14px;color:#60a0f0;font-size:10px;line-height:14px;font-weight:bold;text-align:center;letter-spacing:4px;text-indent:4px;">趋势名称</div>
<div class="a" style="left:495px;top:389px;width:51px;height:14px;color:#60a0f0;font-size:10px;line-height:14px;font-weight:bold;text-align:center;letter-spacing:4px;text-indent:4px;">单位</div>
<div class="a" style="left:546px;top:389px;width:52px;height:14px;color:#60a0f0;font-size:10px;line-height:14px;font-weight:bold;text-align:center;letter-spacing:4px;text-indent:4px;">当前值</div>
<div class="a" style="left:598px;top:389px;width:89px;height:14px;color:#60a0f0;font-size:10px;line-height:14px;font-weight:bold;text-align:center;letter-spacing:4px;text-indent:4px;">量程</div>
<div class="a" style="left:170px;top:389px;width:1px;height:70px;background:#6a5a9a;"></div>
<div class="a" style="left:214px;top:389px;width:1px;height:70px;background:#6a5a9a;"></div>
<div class="a" style="left:259px;top:389px;width:1px;height:70px;background:#6a5a9a;"></div>
<div class="a" style="left:345px;top:389px;width:1px;height:70px;background:#6a5a9a;"></div>
<div class="a" style="left:495px;top:389px;width:1px;height:70px;background:#6a5a9a;"></div>
<div class="a" style="left:546px;top:389px;width:1px;height:70px;background:#6a5a9a;"></div>
<div class="a" style="left:598px;top:389px;width:1px;height:70px;background:#6a5a9a;"></div>
<div class="a" style="left:305px;top:403px;width:1px;height:56px;background:#6a5a9a;"></div>
<div class="a" style="left:646px;top:403px;width:1px;height:56px;background:#6a5a9a;"></div>
<div class="a" style="left:25px;top:403px;width:662px;height:1px;background:#6a5a9a;"></div>
<div class="a" style="left:25px;top:417px;width:662px;height:1px;background:#6a5a9a;"></div>
<div class="a" style="left:25px;top:431px;width:662px;height:1px;background:#6a5a9a;"></div>
<div class="a" style="left:25px;top:444px;width:662px;height:1px;background:#6a5a9a;"></div>
<div class="a" style="left:25px;top:458px;width:662px;height:1px;background:#6a5a9a;"></div>
<div class="a" style="left:25px;top:404px;width:145px;height:13px;border:1px solid #30c0c0;color:#00e000;font-size:9px;line-height:11px;font-weight:bold;padding-left:0px;">过热器二级减温水<span style="padding:0 1px">(</span>下<span style="padding:0 1px">)</span>主<span class="m" style="font-size:10px;letter-spacing:-1px">PID_SP</span></div>
<div class="a" style="left:214px;top:404px;width:45px;height:13px;color:#00e000;font-size:9px;line-height:12px;font-weight:bold;text-align:center;">538.99</div>
<div class="a" style="left:259px;top:404px;width:46px;height:13px;color:#00e000;font-size:9px;line-height:12px;font-weight:bold;text-align:right;padding-right:10px;">0.</div>
<div class="a" style="left:305px;top:404px;width:40px;height:13px;color:#00e000;font-size:9px;line-height:12px;font-weight:bold;text-align:right;padding-right:3px;">600.</div>
<div class="a" style="left:25px;top:418px;width:145px;height:13px;border:1px solid #30c0c0;color:#e0e000;font-size:9px;line-height:11px;font-weight:bold;padding-left:0px;">过热器二级减温水<span style="padding:0 1px">(</span>下<span style="padding:0 1px">)</span>主<span class="m" style="font-size:10px;letter-spacing:-1px">PID_PV</span></div>
<div class="a" style="left:214px;top:418px;width:45px;height:13px;color:#e0e000;font-size:9px;line-height:12px;font-weight:bold;text-align:center;">537.57</div>
<div class="a" style="left:259px;top:418px;width:46px;height:13px;color:#e0e000;font-size:9px;line-height:12px;font-weight:bold;text-align:right;padding-right:10px;">0.</div>
<div class="a" style="left:305px;top:418px;width:40px;height:13px;color:#e0e000;font-size:9px;line-height:12px;font-weight:bold;text-align:right;padding-right:3px;">600.</div>
<div class="a" style="left:25px;top:432px;width:145px;height:13px;border:1px solid #30c0c0;color:#e00000;font-size:9px;line-height:11px;font-weight:bold;padding-left:0px;">过热器二级减温水<span style="padding:0 1px">(</span>下<span style="padding:0 1px">)</span>主<span class="m" style="font-size:10px;letter-spacing:-1px">PID_AV</span></div>
<div class="a" style="left:214px;top:432px;width:45px;height:13px;color:#e00000;font-size:9px;line-height:12px;font-weight:bold;text-align:center;">49.44</div>
<div class="a" style="left:259px;top:432px;width:46px;height:13px;color:#e00000;font-size:9px;line-height:12px;font-weight:bold;text-align:right;padding-right:10px;">0.</div>
<div class="a" style="left:305px;top:432px;width:40px;height:13px;color:#e00000;font-size:9px;line-height:12px;font-weight:bold;text-align:right;padding-right:3px;">600.</div>
<div class="a" style="left:25px;top:445px;width:145px;height:13px;border:1px solid #30c0c0;color:#00d0e0;font-size:9px;line-height:11px;font-weight:bold;padding-left:0px;">过热器二级减温水<span style="padding:0 1px">(</span>下<span style="padding:0 1px">)</span>副<span class="m" style="font-size:10px;letter-spacing:-1px">PID_PV</span></div>
<div class="a" style="left:214px;top:445px;width:45px;height:13px;color:#00d0e0;font-size:9px;line-height:12px;font-weight:bold;text-align:center;">49.48</div>
<div class="a" style="left:259px;top:445px;width:46px;height:13px;color:#00d0e0;font-size:9px;line-height:12px;font-weight:bold;text-align:right;padding-right:10px;">0.</div>
<div class="a" style="left:305px;top:445px;width:40px;height:13px;color:#00d0e0;font-size:9px;line-height:12px;font-weight:bold;text-align:right;padding-right:3px;">600.</div>
<div class="a" style="left:348px;top:404px;width:147px;height:13px;border:1px solid #30c0c0;color:#ff20ff;font-size:9px;line-height:11px;font-weight:bold;padding-left:2px;">过热器二级减温水<span style="padding:0 1px">(</span>下<span style="padding:0 1px">)</span>副<span class="m" style="font-size:10px;letter-spacing:-1px">PID_AV</span></div>
<div class="a" style="left:495px;top:404px;width:51px;height:13px;color:#e0e0e0;font-size:8px;line-height:12px;padding-left:6px;"></div>
<div class="a" style="left:546px;top:404px;width:52px;height:13px;color:#ff20ff;font-size:9px;line-height:12px;text-align:right;padding-right:10px;font-weight:bold;">12.32</div>
<div class="a" style="left:598px;top:404px;width:48px;height:13px;color:#ff20ff;font-size:9px;line-height:12px;text-align:right;padding-right:10px;font-weight:bold;">0.</div>
<div class="a" style="left:646px;top:404px;width:41px;height:13px;color:#ff20ff;font-size:9px;line-height:12px;text-align:right;padding-right:6px;font-weight:bold;">100.</div>
<div class="a" style="left:348px;top:418px;width:147px;height:13px;border:1px solid #30c0c0;color:#ffffff;font-size:9px;line-height:11px;font-weight:bold;padding-left:2px;">总燃料量<span class="m" style="font-size:10px;letter-spacing:-1px">100%</span></div>
<div class="a" style="left:495px;top:418px;width:51px;height:13px;color:#e0e0e0;font-size:8px;line-height:12px;padding-left:6px;"></div>
<div class="a" style="left:546px;top:418px;width:52px;height:13px;color:#ffffff;font-size:9px;line-height:12px;text-align:right;padding-right:10px;">39.06</div>
<div class="a" style="left:598px;top:418px;width:48px;height:13px;color:#ffffff;font-size:9px;line-height:12px;text-align:right;padding-right:10px;">-10000</div>
<div class="a" style="left:646px;top:418px;width:41px;height:13px;color:#ffffff;font-size:9px;line-height:12px;text-align:right;padding-right:6px;">10000</div>
<div class="a" style="left:348px;top:432px;width:147px;height:13px;border:1px solid #30c0c0;color:#8020ff;font-size:9px;line-height:11px;font-weight:bold;padding-left:2px;">过热器二级减温水流量<span style="padding:0 1px">(</span>下<span style="padding:0 1px">)</span></div>
<div class="a" style="left:495px;top:432px;width:51px;height:13px;color:#e0e0e0;font-size:8px;line-height:12px;padding-left:6px;">t/h</div>
<div class="a" style="left:546px;top:432px;width:52px;height:13px;color:#8020ff;font-size:9px;line-height:12px;text-align:right;padding-right:10px;font-weight:bold;">0.80</div>
<div class="a" style="left:598px;top:432px;width:48px;height:13px;color:#8020ff;font-size:9px;line-height:12px;text-align:right;padding-right:10px;font-weight:bold;">0.</div>
<div class="a" style="left:646px;top:432px;width:41px;height:13px;color:#8020ff;font-size:9px;line-height:12px;text-align:right;padding-right:6px;font-weight:bold;">15.</div>
<div class="a" style="left:348px;top:445px;width:147px;height:13px;border:1px solid #30c0c0;color:#b8b8b8;font-size:9px;line-height:11px;font-weight:bold;padding-left:2px;">二级减温器（下）后汽温<span class="m" style="font-size:10px;letter-spacing:-1px">1</span></div>
<div class="a" style="left:495px;top:445px;width:51px;height:13px;color:#e0e0e0;font-size:8px;line-height:12px;padding-left:6px;">°C</div>
<div class="a" style="left:546px;top:445px;width:52px;height:13px;color:#b8b8b8;font-size:9px;line-height:12px;text-align:right;padding-right:10px;">462.04</div>
<div class="a" style="left:598px;top:445px;width:48px;height:13px;color:#b8b8b8;font-size:9px;line-height:12px;text-align:right;padding-right:10px;">0.</div>
<div class="a" style="left:646px;top:445px;width:41px;height:13px;color:#b8b8b8;font-size:9px;line-height:12px;text-align:right;padding-right:6px;">600.</div>
<div class="a" style="left:345px;top:389px;width:2px;height:70px;background:#707080;"></div>
<div class="a" style="left:3px;top:464px;width:694px;height:18px;background:#c0c0c0;border-top:1px solid #404040;box-shadow:inset 0 1px 0 #fff;"></div>
<div class="a" style="left:5px;top:465px;width:70px;height:14px;background:#d6d3c8;border-left:1px solid #fff;border-top:1px solid #fff;border-right:1px solid #404040;border-bottom:1px solid #404040;color:#8030e0;font-size:6.5px;line-height:6.5px;text-align:center;padding-top:0px;overflow:visible;">预定义<br>趋势1</div>
<div class="a" style="left:76px;top:465px;width:68px;height:14px;background:#d6d3c8;border-left:1px solid #fff;border-top:1px solid #fff;border-right:1px solid #404040;border-bottom:1px solid #404040;color:#8030e0;font-size:8px;line-height:12px;text-align:center;">预定义趋势2</div>
<div class="a" style="left:145px;top:465px;width:68px;height:14px;background:#d6d3c8;border-left:1px solid #fff;border-top:1px solid #fff;border-right:1px solid #404040;border-bottom:1px solid #404040;color:#8030e0;font-size:8px;line-height:12px;text-align:center;">预定义趋势3</div>
<div class="a" style="left:214px;top:465px;width:68px;height:14px;background:#d6d3c8;border-left:1px solid #fff;border-top:1px solid #fff;border-right:1px solid #404040;border-bottom:1px solid #404040;color:#8030e0;font-size:8px;line-height:12px;text-align:center;">预定义趋势4</div>
<div class="a" style="left:283px;top:465px;width:69px;height:14px;background:#d6d3c8;border-left:1px solid #fff;border-top:1px solid #fff;border-right:1px solid #404040;border-bottom:1px solid #404040;color:#8030e0;font-size:8px;line-height:12px;text-align:center;">预定义趋势5</div>
<div class="a" style="left:353px;top:465px;width:68px;height:14px;background:#d6d3c8;border-left:1px solid #fff;border-top:1px solid #fff;border-right:1px solid #404040;border-bottom:1px solid #404040;color:#8030e0;font-size:8px;line-height:12px;text-align:center;">预定义趋势6</div>
<div class="a" style="left:422px;top:465px;width:68px;height:14px;background:#d6d3c8;border-left:1px solid #fff;border-top:1px solid #fff;border-right:1px solid #404040;border-bottom:1px solid #404040;color:#8030e0;font-size:8px;line-height:12px;text-align:center;">预定义趋势7</div>
<div class="a" style="left:491px;top:466px;width:135px;height:15px;border-top:1px solid #808080;border-left:1px solid #808080;border-bottom:1px solid #f0f0f0;border-right:1px solid #f0f0f0;"></div>
<div class="a" style="left:627px;top:466px;width:69px;height:15px;border-top:1px solid #808080;border-left:1px solid #808080;border-bottom:1px solid #f0f0f0;"></div>
</body></html>
